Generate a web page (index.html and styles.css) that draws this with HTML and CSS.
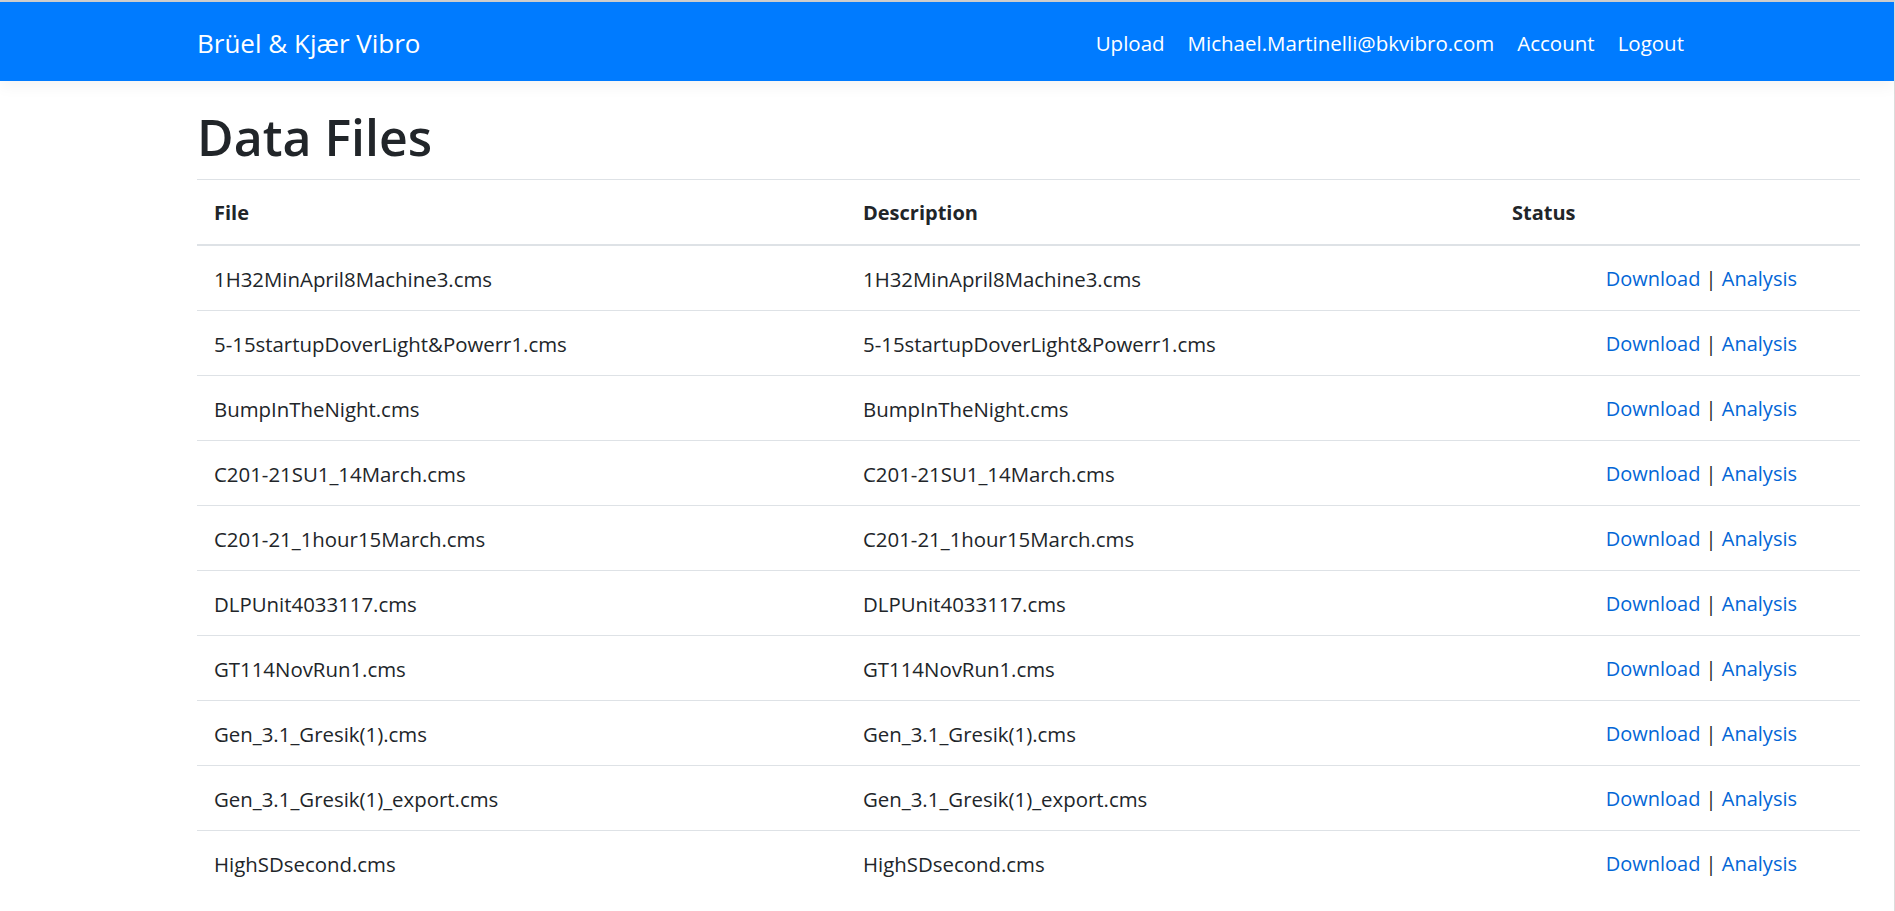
FILE: index.html
```html
<!DOCTYPE html>
<html lang="en">
<head>
<meta charset="utf-8">
<title>Data Files - Brüel &amp; Kjær Vibro</title>
<link rel="stylesheet" href="styles.css">
</head>
<body>
<div class="frame">
  <header class="navbar">
    <a class="brand" href="#">Brüel &amp; Kjær Vibro</a>
    <nav class="nav">
      <a class="nav-link" href="#">Upload</a>
      <a class="nav-link" href="#">Michael.Martinelli@bkvibro.com</a>
      <a class="nav-link" href="#">Account</a>
      <a class="nav-link" href="#">Logout</a>
    </nav>
  </header>
  <main class="main">
    <h1 class="title">Data Files</h1>
    <table class="files">
      <colgroup>
        <col class="col-file">
        <col class="col-desc">
        <col class="col-status">
      </colgroup>
      <thead>
        <tr><th>File</th><th>Description</th><th>Status</th></tr>
      </thead>
      <tbody>
        <tr><td>1H32MinApril8Machine3.cms</td><td>1H32MinApril8Machine3.cms</td><td class="actions"><a href="#">Download</a> | <a href="#">Analysis</a></td></tr>
        <tr><td>5-15startupDoverLight&amp;Powerr1.cms</td><td>5-15startupDoverLight&amp;Powerr1.cms</td><td class="actions"><a href="#">Download</a> | <a href="#">Analysis</a></td></tr>
        <tr><td>BumpInTheNight.cms</td><td>BumpInTheNight.cms</td><td class="actions"><a href="#">Download</a> | <a href="#">Analysis</a></td></tr>
        <tr><td>C201-21SU1_14March.cms</td><td>C201-21SU1_14March.cms</td><td class="actions"><a href="#">Download</a> | <a href="#">Analysis</a></td></tr>
        <tr><td>C201-21_1hour15March.cms</td><td>C201-21_1hour15March.cms</td><td class="actions"><a href="#">Download</a> | <a href="#">Analysis</a></td></tr>
        <tr><td>DLPUnit4033117.cms</td><td>DLPUnit4033117.cms</td><td class="actions"><a href="#">Download</a> | <a href="#">Analysis</a></td></tr>
        <tr><td>GT114NovRun1.cms</td><td>GT114NovRun1.cms</td><td class="actions"><a href="#">Download</a> | <a href="#">Analysis</a></td></tr>
        <tr><td>Gen_3.1_Gresik(1).cms</td><td>Gen_3.1_Gresik(1).cms</td><td class="actions"><a href="#">Download</a> | <a href="#">Analysis</a></td></tr>
        <tr><td>Gen_3.1_Gresik(1)_export.cms</td><td>Gen_3.1_Gresik(1)_export.cms</td><td class="actions"><a href="#">Download</a> | <a href="#">Analysis</a></td></tr>
        <tr><td>HighSDsecond.cms</td><td>HighSDsecond.cms</td><td class="actions"><a href="#">Download</a> | <a href="#">Analysis</a></td></tr>
      </tbody>
    </table>
  </main>
</div>
</body>
</html>
```
FILE: styles.css
```css
html, body {
  margin: 0;
  padding: 0;
  background: #fff;
}

body {
  font-family: "Open Sans", "Noto Sans", "DejaVu Sans", sans-serif;
  font-size: 20px;
  line-height: 1.5;
  color: #212529;
  overflow: hidden;
}

.frame {
  min-height: 909px;
  border-top: 2px solid #cfcfcf;
  border-right: 1px solid #dcdcdc;
}

a {
  text-decoration: none;
}

.navbar {
  box-sizing: border-box;
  height: 79px;
  padding: 3px 198.5px 0 197px;
  background: #007bff;
  display: flex;
  align-items: center;
  justify-content: space-between;
  box-shadow: 0 5px 15px rgba(0, 0, 0, 0.05);
  position: relative;
}

.brand {
  color: #fff;
  font-size: 26px;
  line-height: 1.5;
}

.nav {
  display: flex;
  align-items: center;
}

.nav-link {
  color: #fff;
  font-size: 20.5px;
  line-height: 1.5;
  padding: 0 11.5px;
}

.main {
  padding: 26px 0 0 197px;
  width: 1663px;
}

.title {
  margin: 0 0 12px;
  font-size: 50px;
  font-weight: 600;
  line-height: 60px;
  color: #212529;
}

.files {
  width: 1663px;
  table-layout: fixed;
  border-collapse: collapse;
  border-top: 1px solid #dee2e6;
}

.col-file { width: 649px; }
.col-desc { width: 649px; }
.col-status { width: 365px; }

.files th {
  text-align: left;
  font-weight: 700;
  padding: 18px 17px 16px;
  line-height: 30px;
  border-bottom: 2px solid #dee2e6;
}

.files td {
  padding: 18px 17px 16px;
  font-size: 20.4px;
  line-height: 30px;
  border-top: 1px solid #dee2e6;
  white-space: nowrap;
}

.files td.actions {
  text-align: right;
  font-size: 20px;
  padding-right: 63px;
}

.files td.actions a {
  color: #0366d6;
}
```
